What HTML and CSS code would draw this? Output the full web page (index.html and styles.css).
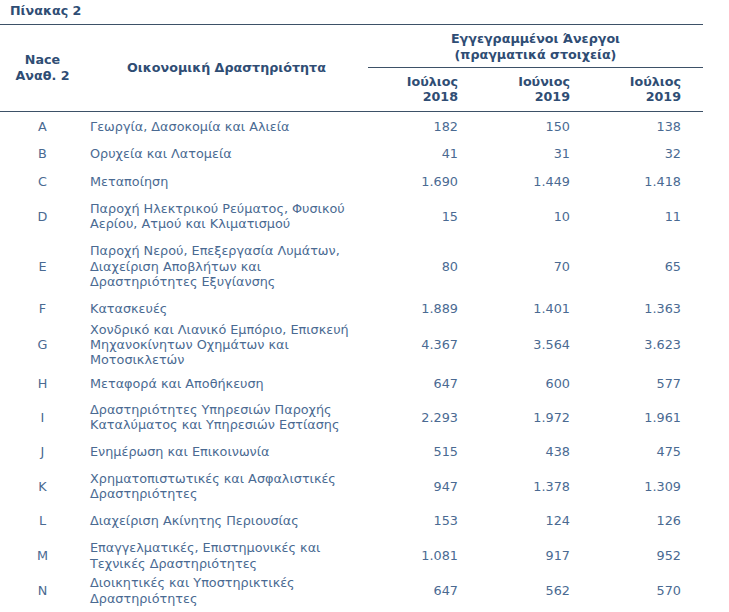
FILE: index.html
```html
<!DOCTYPE html>
<html lang="el">
<head>
<meta charset="utf-8">
<title>Πίνακας 2</title>
<link rel="stylesheet" href="styles.css">
</head>
<body>
<div class="title">Πίνακας 2</div>
<table class="tbl">
  <colgroup>
    <col class="c-code"><col class="c-desc"><col class="c-num"><col class="c-num"><col class="c-num3">
  </colgroup>
  <thead>
    <tr class="h1">
      <th rowspan="2" class="th-code">Nace<br>Αναθ. 2</th>
      <th rowspan="2" class="th-desc">Οικονομική Δραστηριότητα</th>
      <th colspan="3" class="th-group">Εγγεγραμμένοι Άνεργοι<br>(πραγματικά στοιχεία)</th>
    </tr>
    <tr class="h2">
      <th class="th-num">Ιούλιος<br>2018</th>
      <th class="th-num">Ιούνιος<br>2019</th>
      <th class="th-num">Ιούλιος<br>2019</th>
    </tr>
  </thead>
  <tbody>
    <tr class="first"><td class="code">A</td><td class="desc">Γεωργία, Δασοκομία και Αλιεία</td><td class="num">182</td><td class="num">150</td><td class="num">138</td></tr>
    <tr><td class="code">B</td><td class="desc">Ορυχεία και Λατομεία</td><td class="num">41</td><td class="num">31</td><td class="num">32</td></tr>
    <tr class="roomy"><td class="code">C</td><td class="desc">Μεταποίηση</td><td class="num">1.690</td><td class="num">1.449</td><td class="num">1.418</td></tr>
    <tr><td class="code">D</td><td class="desc">Παροχή Ηλεκτρικού Ρεύματος, Φυσικού<br>Αερίου, Ατμού και Κλιματισμού</td><td class="num">15</td><td class="num">10</td><td class="num">11</td></tr>
    <tr><td class="code">E</td><td class="desc">Παροχή Νερού, Επεξεργασία Λυμάτων,<br>Διαχείριση Αποβλήτων και<br>Δραστηριότητες Εξυγίανσης</td><td class="num">80</td><td class="num">70</td><td class="num">65</td></tr>
    <tr><td class="code">F</td><td class="desc">Κατασκευές</td><td class="num">1.889</td><td class="num">1.401</td><td class="num">1.363</td></tr>
    <tr class="tight"><td class="code">G</td><td class="desc">Χονδρικό και Λιανικό Εμπόριο, Επισκευή<br>Μηχανοκίνητων Οχημάτων και<br>Μοτοσικλετών</td><td class="num">4.367</td><td class="num">3.564</td><td class="num">3.623</td></tr>
    <tr class="low"><td class="code">H</td><td class="desc">Μεταφορά και Αποθήκευση</td><td class="num">647</td><td class="num">600</td><td class="num">577</td></tr>
    <tr><td class="code">I</td><td class="desc">Δραστηριότητες Υπηρεσιών Παροχής<br>Καταλύματος και Υπηρεσιών Εστίασης</td><td class="num">2.293</td><td class="num">1.972</td><td class="num">1.961</td></tr>
    <tr class="high"><td class="code">J</td><td class="desc">Ενημέρωση και Επικοινωνία</td><td class="num">515</td><td class="num">438</td><td class="num">475</td></tr>
    <tr><td class="code">K</td><td class="desc">Χρηματοπιστωτικές και Ασφαλιστικές<br>Δραστηριότητες</td><td class="num">947</td><td class="num">1.378</td><td class="num">1.309</td></tr>
    <tr><td class="code">L</td><td class="desc">Διαχείριση Ακίνητης Περιουσίας</td><td class="num">153</td><td class="num">124</td><td class="num">126</td></tr>
    <tr class="short-bottom"><td class="code">M</td><td class="desc">Επαγγελματικές, Επιστημονικές και<br>Τεχνικές Δραστηριότητες</td><td class="num">1.081</td><td class="num">917</td><td class="num">952</td></tr>
    <tr class="short-top"><td class="code">N</td><td class="desc">Διοικητικές και Υποστηρικτικές<br>Δραστηριότητες</td><td class="num">647</td><td class="num">562</td><td class="num">570</td></tr>
  </tbody>
</table>
</body>
</html>
```
FILE: styles.css
```css
html, body {
  margin: 0;
  padding: 0;
  background: #ffffff;
}
body {
  font-family: "DejaVu Sans", Verdana, sans-serif;
  font-size: 12.8px;
  color: #4a6a92;
}
.title {
  font-weight: bold;
  font-size: 12.7px;
  color: #2f4d74;
  padding: 3px 0 0 10px;
  height: 24px;
  line-height: 15px;
  box-sizing: border-box;
}
.tbl {
  width: 703px;
  border-collapse: collapse;
  table-layout: fixed;
  border-top: 1px solid #3d5167;
}
.c-code { width: 85px; }
.c-desc { width: 283px; }
.c-num { width: 112px; }
.c-num3 { width: 111px; }
th {
  font-weight: bold;
  font-size: 12.7px;
  color: #2f4d74;
  line-height: 15.5px;
  padding: 0;
}
.h1 th { height: 39.5px; }
.h2 th { height: 43px; }
thead tr.h2 th, thead .th-code, thead .th-desc {
  border-bottom: 1px solid #3d5167;
}
.th-code { text-align: center; }
.th-desc { text-align: center; }
.th-group {
  text-align: center;
  border-bottom: 1px solid #3d5167;
  vertical-align: middle;
  padding-top: 2px;
}
.th-num {
  text-align: right;
  padding-right: 22px;
}
td {
  line-height: 15.3px;
  padding: 6px 0 5.7px;
  vertical-align: middle;
}
.first td { padding-top: 7.5px; }
.roomy td { padding-top: 7px; }
.tight td { padding-top: 0; padding-bottom: 0.5px; }
.low td { padding-top: 7.5px; padding-bottom: 5.2px; }
.high td { padding-top: 5.5px; }
.short-bottom td { padding-bottom: 3px; }
.short-top td { padding-top: 1.5px; padding-bottom: 2px; }
.code { text-align: center; }
.desc { padding-left: 5px; padding-right: 4px; white-space: nowrap; }
.num { text-align: right; padding-right: 22px; }
```
